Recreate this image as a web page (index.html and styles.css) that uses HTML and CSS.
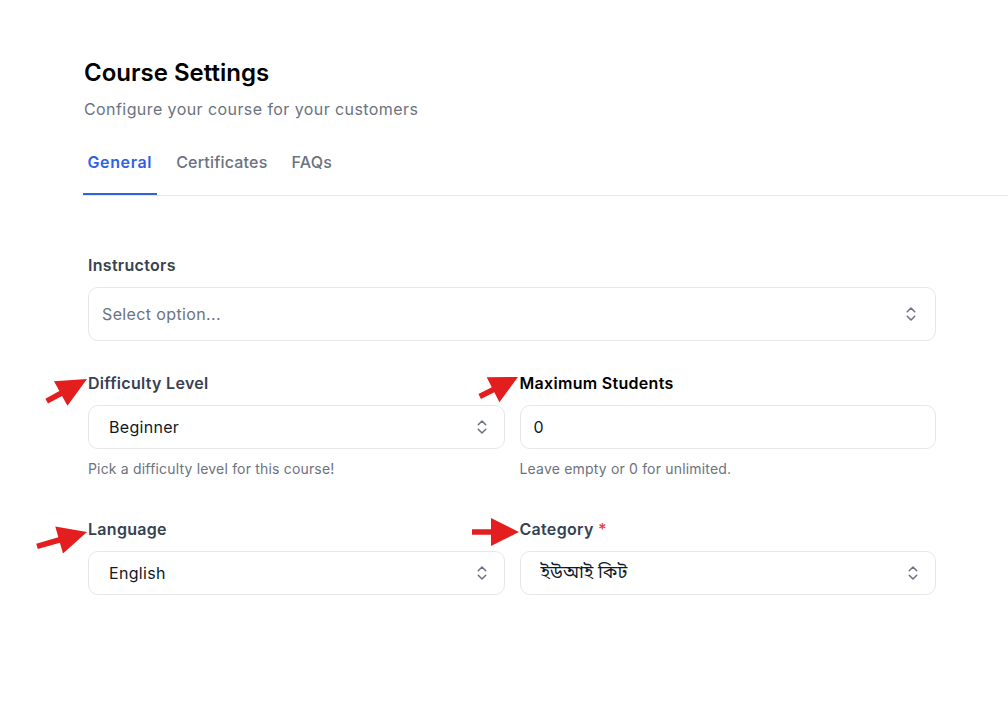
FILE: index.html
```html
<!DOCTYPE html>
<html lang="en">
<head>
<meta charset="utf-8">
<title>Course Settings</title>
<link rel="stylesheet" href="styles.css">
</head>
<body>
<main class="page">
  <header class="page-head">
    <h1 class="title">Course Settings</h1>
    <p class="subtitle">Configure your course for your customers</p>
  </header>

  <nav class="tabs">
    <a class="tab tab-active">General</a>
    <a class="tab">Certificates</a>
    <a class="tab">FAQs</a>
  </nav>

  <form class="form">
    <div class="field">
      <label class="label">Instructors</label>
      <div class="control control-lg">
        <span class="placeholder">Select option...</span>
        <svg class="chev" viewBox="0 0 24 24" width="18" height="18"><path d="M7 15l5 5 5-5M7 9l5-5 5 5"/></svg>
      </div>
    </div>

    <div class="grid">
      <div class="field">
        <label class="label">Difficulty Level</label>
        <div class="control control-select">
          <span class="value">Beginner</span>
          <svg class="chev" viewBox="0 0 24 24" width="18" height="18"><path d="M7 15l5 5 5-5M7 9l5-5 5 5"/></svg>
        </div>
        <p class="help">Pick a difficulty level for this course!</p>
      </div>
      <div class="field">
        <label class="label label-dark">Maximum Students</label>
        <div class="control control-input">
          <span class="value">0</span>
        </div>
        <p class="help">Leave empty or 0 for unlimited.</p>
      </div>
      <div class="field">
        <label class="label">Language</label>
        <div class="control control-select">
          <span class="value">English</span>
          <svg class="chev" viewBox="0 0 24 24" width="18" height="18"><path d="M7 15l5 5 5-5M7 9l5-5 5 5"/></svg>
        </div>
      </div>
      <div class="field">
        <label class="label">Category <span class="req">*</span></label>
        <div class="control control-select">
          <span class="value value-bn">ইউআই কিট</span>
          <svg class="chev" viewBox="0 0 24 24" width="18" height="18"><path d="M7 15l5 5 5-5M7 9l5-5 5 5"/></svg>
        </div>
      </div>
    </div>
  </form>

  <svg class="annotations" viewBox="0 0 1008 709" width="1008" height="709">
    <g transform="translate(87 379) rotate(-28.8)"><polygon points="0,0 -30,-14 -30,-2.8 -46,-2.8 -46,2.8 -30,2.8 -30,14"/></g>
    <g transform="translate(518 377) rotate(-27)"><polygon points="0,0 -28,-14 -28,-2.8 -43,-2.8 -43,2.8 -28,2.8 -28,14"/></g>
    <g transform="translate(87 532) rotate(-16)"><polygon points="0,0 -29,-14 -29,-2.8 -52,-2.8 -52,2.8 -29,2.8 -29,14"/></g>
    <g transform="translate(519 532)"><polygon points="0,0 -28,-14 -28,-2.8 -47,-2.8 -47,2.8 -28,2.8 -28,14"/></g>
  </svg>
</main>
</body>
</html>
```

FILE: styles.css
```css
* { box-sizing: border-box; }

html, body {
  margin: 0;
  padding: 0;
  background: #ffffff;
}

body {
  font-family: Inter, "Noto Sans", "Liberation Sans", sans-serif;
  color: #111827;
}

.page {
  position: relative;
  min-height: 709px;
  padding: 57px 0 0 83px;
}

.title {
  margin: 0 0 0 1px;
  font-size: 24px;
  line-height: 32px;
  font-weight: 600;
  color: #000000;
}

.subtitle {
  margin: 8px 0 0 1px;
  font-size: 16px;
  line-height: 24px;
  letter-spacing: 0.42px;
  color: #6b7280;
}

.tabs {
  display: flex;
  gap: 15px;
  margin-top: 17px;
  border-bottom: 1px solid #e5e7eb;
}

.tab {
  padding: 12px 4.5px 19px;
  font-size: 16px;
  line-height: 24px;
  font-weight: 500;
  letter-spacing: 0.2px;
  color: #6b7280;
  border-bottom: 2px solid transparent;
}

.tab-active {
  font-weight: 600;
  letter-spacing: 0.62px;
  color: #2f62e3;
  border-bottom-color: #2f62e3;
}

.form {
  width: 848px;
  margin: 57px 0 0 5px;
}

.field {
  display: flex;
  flex-direction: column;
}

.label {
  font-size: 16px;
  line-height: 24px;
  font-weight: 600;
  letter-spacing: 0.3px;
  color: #374151;
  margin-bottom: 10px;
}

.label-dark { color: #000000; }

.req { color: #ef4444; }

.control {
  display: flex;
  align-items: center;
  justify-content: space-between;
  border: 1px solid #e5e7eb;
  border-radius: 10px;
  background: #ffffff;
  font-size: 16px;
  line-height: 24px;
  letter-spacing: 0.3px;
}

.control-lg {
  height: 54px;
  padding: 0 15px 0 13px;
}

.control-select {
  height: 44px;
  padding: 0 13px 0 20px;
}

.control-input {
  height: 44px;
  padding: 0 13px;
}

.placeholder {
  color: #6b7280;
  letter-spacing: 0.37px;
}

.value { color: #111827; }

.value-bn {
  font-family: "Noto Sans Bengali", "Lohit Bengali", "FreeSerif", serif;
  font-size: 18px;
  letter-spacing: 0;
}

.chev {
  fill: none;
  stroke: #6b7280;
  stroke-width: 2;
  stroke-linecap: round;
  stroke-linejoin: round;
}

.help {
  margin: 10px 0 0;
  font-size: 14px;
  line-height: 20px;
  letter-spacing: 0.18px;
  color: #6b7280;
}

.grid {
  display: grid;
  grid-template-columns: 1fr 1fr;
  column-gap: 15px;
  row-gap: 38px;
  margin-top: 30px;
}

.annotations {
  position: absolute;
  left: 0;
  top: 0;
  pointer-events: none;
}

.annotations polygon { fill: #e41e1e; }
```
